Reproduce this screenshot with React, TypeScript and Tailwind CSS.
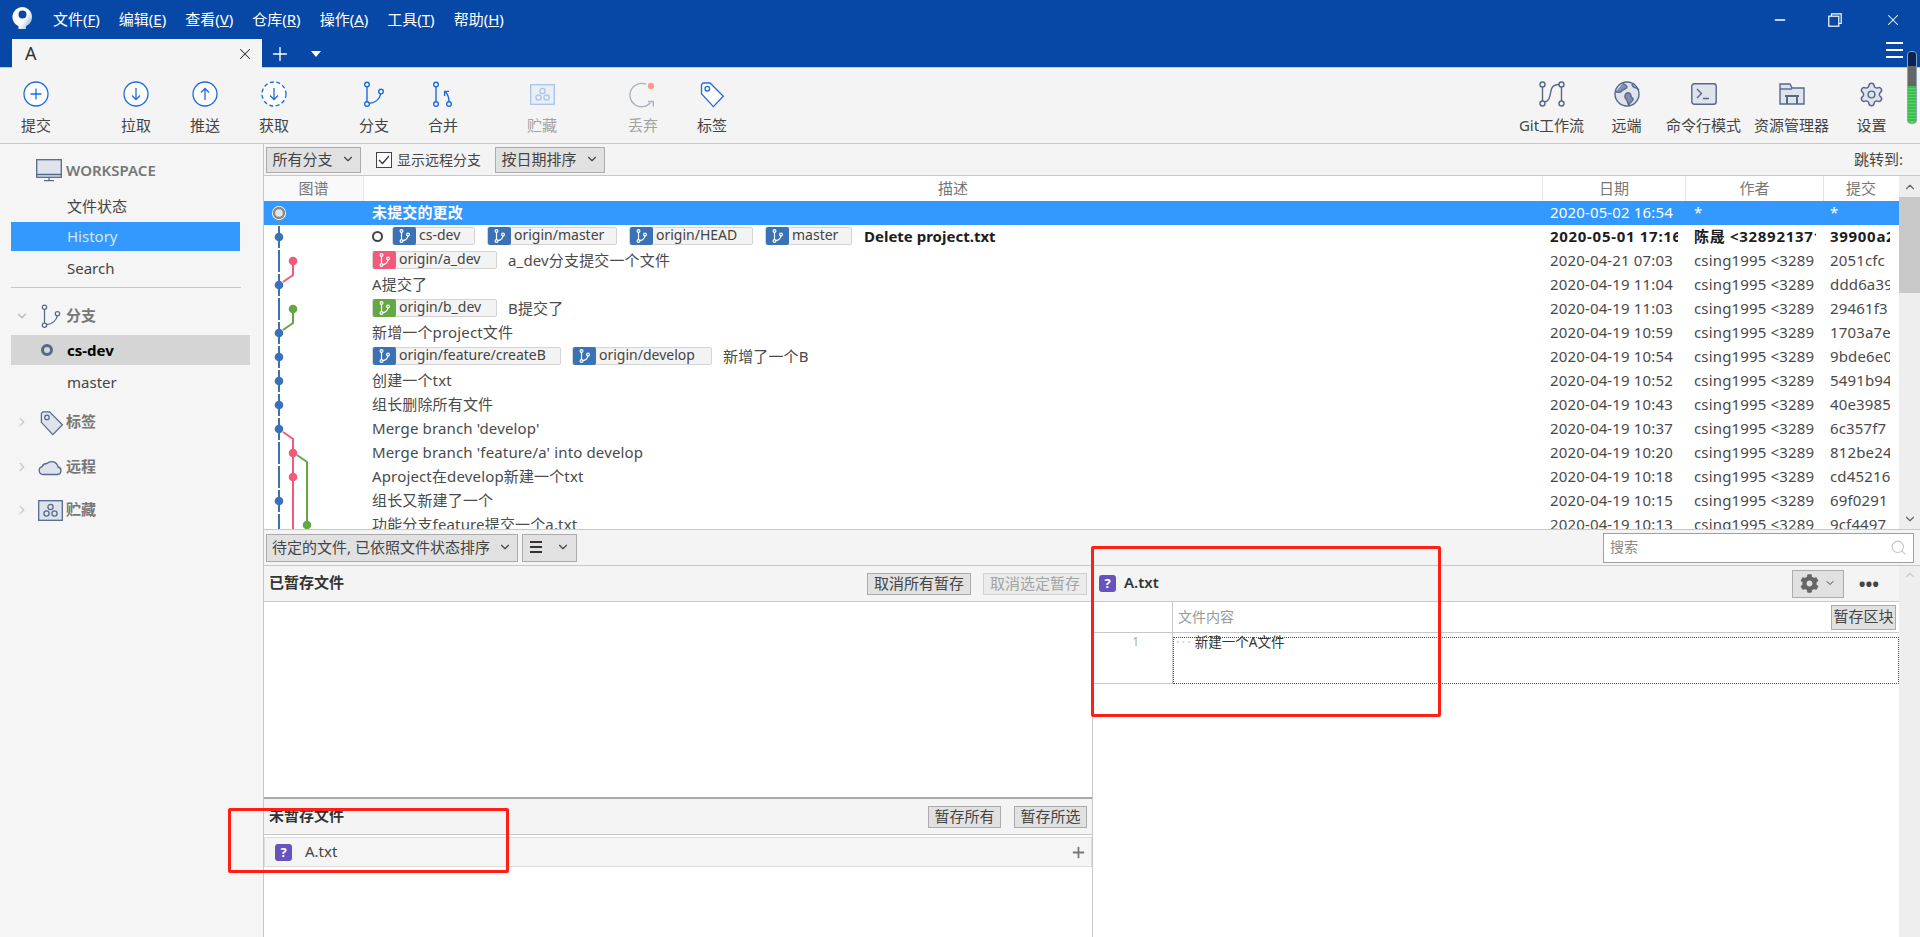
import type { ReactNode } from "react";
import { ChevronDown, ChevronRight, ChevronUp, Minus, Plus, Search, Settings, X } from "lucide-react";
import { FaCog } from "react-icons/fa";

const font = { fontFamily: '"Noto Sans", "Noto Sans CJK SC", sans-serif' };
const slate = "#56688c";
const slateFill = "#dfe3ec";
const blue = "#1c6ce0";

const menus = [
  ["文件(", "F", ")"],
  ["编辑(", "E", ")"],
  ["查看(", "V", ")"],
  ["仓库(", "R", ")"],
  ["操作(", "A", ")"],
  ["工具(", "T", ")"],
  ["帮助(", "H", ")"],
];

function CircleIcon({ dir, dashed }: { dir: "plus" | "down" | "up"; dashed?: boolean }) {
  return (
    <svg width="28" height="28" viewBox="0 0 28 28" fill="none" stroke={blue} strokeWidth="1.3">
      <circle cx="14" cy="14" r="12" fill="#fff" strokeDasharray={dashed ? "4 2.5" : undefined} />
      {dir === "plus" && <path d="M14 8.500v11M8.500 14h11" />}
      {dir === "down" && <path d="M14 8v11.500M10 15.500l4 4 4-4" />}
      {dir === "up" && <path d="M14 20V8.500M10 12.500l4-4 4 4" />}
    </svg>
  );
}

function BranchIcon({ color = blue, size = 28 }: { color?: string; size?: number }) {
  return (
    <svg width={size} height={size} viewBox="0 0 28 28" fill="none" stroke={color} strokeWidth="1.4">
      <circle cx="7" cy="4.500" r="2.300" fill="#fff" />
      <circle cx="7" cy="24" r="2.300" fill="#fff" />
      <circle cx="21" cy="11.500" r="2.300" fill="#fff" />
      <path d="M7 6.800v14.900M9.200 23.400c6-.8 10.600-4.600 11.500-9.600" />
    </svg>
  );
}

function MergeIcon() {
  return (
    <svg width="28" height="28" viewBox="0 0 28 28" fill="none" stroke={blue} strokeWidth="1.4">
      <circle cx="7" cy="4.500" r="2.300" fill="#fff" />
      <circle cx="7" cy="24" r="2.300" fill="#fff" />
      <circle cx="20" cy="24" r="2.300" fill="#fff" />
      <path d="M7 6.800v14.900M20 21.700c0-4-1.200-7.200-3.400-9.700M15.600 16v-4.600h4.400" />
    </svg>
  );
}

function StashIcon({ color, fill, w = 25, h = 21 }: { color: string; fill: string; w?: number; h?: number }) {
  return (
    <svg width={w} height={h} viewBox="0 0 25 21" fill={fill} stroke={color} strokeWidth="1.3">
      <rect x="0.700" y="0.700" width="23.600" height="19.600" />
      <circle cx="12.500" cy="7" r="2.600" fill="none" />
      <circle cx="8.500" cy="13.500" r="2.600" fill="none" />
      <circle cx="16.500" cy="13.500" r="2.600" fill="none" />
    </svg>
  );
}

function DiscardIcon() {
  return (
    <svg width="28" height="28" viewBox="0 0 28 28" fill="none" stroke="#aab2c0" strokeWidth="1.4">
      <path d="M17 4.200A11.700 11.700 0 1 0 21.500 22.700" />
      <path d="M19 21.500h5.300V26.500" />
      <circle cx="22" cy="6" r="3.200" fill="#ff9d8e" stroke="none" />
    </svg>
  );
}

function TagIcon({ color = blue, fill = "#fff", size = 28 }: { color?: string; fill?: string; size?: number }) {
  return (
    <svg width={size} height={size} viewBox="0 0 28 28" fill={fill} stroke={color} strokeWidth="1.3">
      <path d="M3.500 4.600 5 3h7l13.300 13.300L15.400 26.600 3.500 13.800z" />
      <circle cx="9.300" cy="8.700" r="2.300" />
    </svg>
  );
}

function GitFlowIcon() {
  return (
    <svg width="28" height="28" viewBox="0 0 28 28" fill="none" stroke={slate} strokeWidth="1.4">
      <circle cx="4.500" cy="4.500" r="2.500" />
      <circle cx="4.500" cy="23.500" r="2.500" />
      <circle cx="23.500" cy="4.500" r="2.500" />
      <circle cx="23.500" cy="23.500" r="2.500" />
      <path d="M4.500 7v14M23.500 7v14M6.500 22c6-1 5-7 7-13 1-3 4-4.500 7.500-4.500" />
    </svg>
  );
}

function GlobeIcon() {
  return (
    <svg width="28" height="28" viewBox="0 0 28 28" stroke={slate} strokeWidth="1.4">
      <circle cx="14" cy="14" r="12" fill={slateFill} />
      <path
        d="M10 3c1 2 4 2 4 4s-4 2-5 4-4 1-6.500 1M14 13c2-1 4 1 4 3s3 2 2 4-4 3-4 5c-2-2-1-4-3-6s-1-5 1-6zM19 4c0 2 2 4 4 4 1 0 2 1 3 2"
        fill="#8090ad"
      />
    </svg>
  );
}

function TerminalIcon() {
  return (
    <svg width="26" height="22" viewBox="0 0 26 22" fill={slateFill} stroke={slate} strokeWidth="1.4">
      <rect x="0.800" y="0.800" width="24.400" height="20.400" rx="2.500" />
      <path d="M6 6l4.500 4.500L6 15M12 15.500h6" fill="none" />
    </svg>
  );
}

function FolderIcon() {
  return (
    <svg width="26" height="22" viewBox="0 0 26 22" fill={slateFill} stroke={slate} strokeWidth="1.4">
      <path d="M1 21V1h10l2 4h12v16z" />
      <path d="M1 6h12" fill="none" />
      <path d="M8 21v-8h10v8M6 13h14" fill="none" strokeWidth="2" />
    </svg>
  );
}

function MonitorIcon() {
  return (
    <svg width="26" height="23" viewBox="0 0 26 23" fill={slateFill} stroke={slate} strokeWidth="1.3">
      <rect x="0.700" y="0.700" width="24.600" height="17.600" />
      <path d="M1 15.500h24M13 18.500v3M8 21.700h10" fill="none" />
    </svg>
  );
}

function CloudIcon() {
  return (
    <svg width="24" height="18" viewBox="0 0 24 18" fill={slateFill} stroke={slate} strokeWidth="1.3">
      <path d="M5 16.500A4 4 0 0 1 4 8.700 5 5 0 0 1 9 5.500a6.500 6.500 0 0 1 11 3.500 3.800 3.800 0 0 1-1 7.500z" />
    </svg>
  );
}

function ToolItem({ label, icon, width, muted }: { label: string; icon: ReactNode; width: string; muted?: boolean }) {
  return (
    <div className={`flex shrink-0 flex-col items-center ${width}`}>
      <div className="flex h-[28px] items-center justify-center">{icon}</div>
      <span className={`mt-[7px] whitespace-nowrap text-[15px] leading-[20px] ${muted ? "text-[#a3a3a3]" : "text-[#444]"}`}>{label}</span>
    </div>
  );
}

function SectionRow({ chevron, icon, label, className }: { chevron: "down" | "right"; icon: ReactNode; label: string; className: string }) {
  return (
    <div className={`flex items-center ${className}`}>
      <div className="flex w-[38px] shrink-0 justify-end pr-[5px]">
        {chevron === "down" ? (
          <ChevronDown size={14} className="mr-[4px] text-[#bbb]" strokeWidth={2.500} />
        ) : (
          <ChevronRight size={14} className="mr-[4px] text-[#ccc]" strokeWidth={2.500} />
        )}
      </div>
      <div className="flex w-[28px] shrink-0 justify-start">{icon}</div>
      <span className="pb-[2px] text-[15px] font-semibold text-[#777]">{label}</span>
    </div>
  );
}

function Btn({ children, className = "" }: { children: ReactNode; className?: string }) {
  return (
    <div className={`flex shrink-0 items-center justify-center whitespace-nowrap border border-[#ababab] bg-[#e1e1e1] pb-px text-[15px] text-[#444] ${className}`}>{children}</div>
  );
}

function RefBadge({ name, color, width }: { name: string; color: string; width: string }) {
  return (
    <div className={`flex h-[18px] shrink-0 items-center rounded-[2px] border border-[#d4d4d4] bg-[#f3f3f3] font-normal tracking-normal ${width}`}>
      <div className={`flex h-[18px] w-[23px] shrink-0 items-center justify-center rounded-[2px] ${color}`}>
        <svg width="13" height="14" viewBox="0 0 13 14" fill="none" stroke="#fff" strokeWidth="1.2">
          <circle cx="3.500" cy="2" r="1.400" />
          <circle cx="3.500" cy="12" r="1.400" />
          <circle cx="10" cy="5.500" r="1.400" />
          <path d="M3.500 3.400v7.200M4.800 11.700c2.700-.4 4.700-2.300 5.200-4.800" />
        </svg>
      </div>
      <span className="pb-[2px] pl-[3px] text-[14px] leading-none text-[#444]">{name}</span>
    </div>
  );
}

function QuestionIcon({ className = "" }: { className?: string }) {
  return (
    <div className={`flex h-[17px] w-[17px] shrink-0 items-center justify-center rounded-[3px] bg-[#6753bd] text-[13px] font-bold leading-none text-white ${className}`}>?</div>
  );
}

const blueRef = "bg-[#3a72b5]";
const rows: { desc: ReactNode; date: string; author: string; commit: string }[] = [
  { desc: null, date: "2020-05-02 16:54", author: "*", commit: "*" },
  { desc: null, date: "2020-05-01 17:16", author: "陈晟 <328921371", commit: "39900a2" },
  {
    desc: (
      <>
        <RefBadge name="origin/a_dev" color="bg-[#f2597a]" width="w-[125px]" />
        <span className="ml-[11px]">a_dev分支提交一个文件</span>
      </>
    ),
    date: "2020-04-21 07:03",
    author: "csing1995 <3289",
    commit: "2051cfc",
  },
  { desc: "A提交了", date: "2020-04-19 11:04", author: "csing1995 <3289", commit: "ddd6a39" },
  {
    desc: (
      <>
        <RefBadge name="origin/b_dev" color="bg-[#62a844]" width="w-[125px]" />
        <span className="ml-[11px]">B提交了</span>
      </>
    ),
    date: "2020-04-19 11:03",
    author: "csing1995 <3289",
    commit: "29461f3",
  },
  { desc: "新增一个project文件", date: "2020-04-19 10:59", author: "csing1995 <3289", commit: "1703a7e" },
  {
    desc: (
      <>
        <RefBadge name="origin/feature/createB" color={blueRef} width="w-[189px]" />
        <div className="ml-[11px]">
          <RefBadge name="origin/develop" color={blueRef} width="w-[140px]" />
        </div>
        <span className="ml-[11px]">新增了一个B</span>
      </>
    ),
    date: "2020-04-19 10:54",
    author: "csing1995 <3289",
    commit: "9bde6e0",
  },
  { desc: "创建一个txt", date: "2020-04-19 10:52", author: "csing1995 <3289", commit: "5491b94" },
  { desc: "组长删除所有文件", date: "2020-04-19 10:43", author: "csing1995 <3289", commit: "40e3985" },
  { desc: "Merge branch 'develop'", date: "2020-04-19 10:37", author: "csing1995 <3289", commit: "6c357f7" },
  { desc: "Merge branch 'feature/a' into develop", date: "2020-04-19 10:20", author: "csing1995 <3289", commit: "812be24" },
  { desc: "Aproject在develop新建一个txt", date: "2020-04-19 10:18", author: "csing1995 <3289", commit: "cd45216" },
  { desc: "组长又新建了一个", date: "2020-04-19 10:15", author: "csing1995 <3289", commit: "69f0291" },
  { desc: "功能分支feature提交一个a.txt", date: "2020-04-19 10:13", author: "csing1995 <3289", commit: "9cf4497" },
];

const blueDots = [1, 3, 5, 6, 7, 8, 9, 12];

function Graph() {
  const cy = (i: number) => 12 + 24 * i;
  return (
    <svg className="absolute left-0 top-0" width="60" height="329" viewBox="0 0 60 329" fill="none" strokeWidth="2">
      <path d="M15 12V329" stroke="#3a72b5" strokeDasharray="22 2" strokeDashoffset="11" />
      <path d="M29 60V74L19 81" stroke="#f2597a" />
      <path d="M29 108V122L19 129" stroke="#62a844" />
      <path d="M19 231L29 238V329" stroke="#f2597a" />
      <path d="M33 254L43 261V325" stroke="#62a844" />
      {blueDots.map((i) => (
        <circle key={i} cx="15" cy={cy(i)} r="4.300" fill="#3a72b5" stroke="none" />
      ))}
      <circle cx="29" cy={cy(2)} r="4.300" fill="#f2597a" stroke="none" />
      <circle cx="29" cy={cy(10)} r="4.300" fill="#f2597a" stroke="none" />
      <circle cx="29" cy={cy(11)} r="4.300" fill="#f2597a" stroke="none" />
      <circle cx="29" cy={cy(4)} r="4.300" fill="#62a844" stroke="none" />
      <circle cx="43" cy={cy(13)} r="4.300" fill="#62a844" stroke="none" />
      <path d="M15 12v12" stroke="#8a8a8a" />
      <circle cx="15" cy="12" r="7" fill="#fff" stroke="none" />
      <circle cx="15" cy="12" r="5" fill="#e6e6e6" stroke="#8a8a8a" strokeWidth="2.400" />
    </svg>
  );
}

function CommitRow({ row, index }: { row: (typeof rows)[number]; index: number }) {
  const selected = index === 0;
  const bold = index === 1;
  const tone = selected ? "text-white" : bold ? "font-bold text-[#1d1d1d]" : "text-[#4a4a4a]";
  const dataTrack = bold ? "tracking-[0.7px]" : "tracking-[0.15px]";
  return (
    <div className={`flex h-6 shrink-0 items-center pb-[2px] text-[15px] ${tone} ${selected ? "bg-[#3399ff]" : ""}`}>
      <div className="w-[108px] shrink-0" />
      <div className={`flex w-[1170px] shrink-0 items-center whitespace-nowrap ${bold ? "" : "tracking-[0.15px]"}`}>
        {selected && <span className="font-bold">未提交的更改</span>}
        {bold && (
          <>
            <span className="mr-[9px] h-[11px] w-[11px] shrink-0 rounded-full border-[2.5px] border-[#444]" />
            <RefBadge name="cs-dev" color={blueRef} width="w-[83px]" />
            <div className="ml-[12px]">
              <RefBadge name="origin/master" color={blueRef} width="w-[130px]" />
            </div>
            <div className="ml-[12px]">
              <RefBadge name="origin/HEAD" color={blueRef} width="w-[124px]" />
            </div>
            <div className="ml-[12px]">
              <RefBadge name="master" color={blueRef} width="w-[87px]" />
            </div>
            <span className="ml-[12px]">Delete project.txt</span>
          </>
        )}
        {row.desc}
      </div>
      <div className={`w-[136px] shrink-0 overflow-hidden whitespace-nowrap pl-[8px] ${dataTrack}`}>{row.date}</div>
      <div className={`ml-[7px] w-[131px] shrink-0 overflow-hidden whitespace-nowrap pl-[9px] ${dataTrack}`}>{row.author}</div>
      <div className={`ml-[7px] w-[67px] shrink-0 overflow-hidden whitespace-nowrap pl-[7px] ${dataTrack}`}>{row.commit}</div>
      <div className="w-[9px] shrink-0" />
    </div>
  );
}

function AppLogo() {
  return (
    <svg width="21" height="23" viewBox="0 0 21 23">
      <defs>
        <linearGradient id="logoFade" x1="0.300" y1="0.300" x2="1" y2="0.800">
          <stop offset="0.450" stopColor="#fff" />
          <stop offset="1" stopColor="#8fb0e0" />
        </linearGradient>
      </defs>
      <path
        fill="url(#logoFade)"
        fillRule="evenodd"
        d="M10 0a10 10 0 0 1 4 19.200V22H6.500v-2.800A10 10 0 0 1 10 0zm.5 3.500a4 4 0 1 0 0 8 4 4 0 0 0 0-8z"
      />
    </svg>
  );
}

export default function App() {
  return (
    <div className="relative flex h-[937px] w-[1920px] flex-col overflow-hidden bg-[#f4f4f4] text-[#444]" style={font}>
      <header className="h-[68px] shrink-0 border-b border-[#bfcbe2] bg-[#0747a6] text-white">
        <div className="flex h-[39px] items-center">
          <div className="ml-[12px] mt-[-2px] flex w-[22px] shrink-0">
            <AppLogo />
          </div>
          <nav className="ml-[19px] flex gap-[19px] text-[15px]">
            {menus.map(([a, k, b]) => (
              <span key={k} className="whitespace-nowrap">
                {a}
                <span className="underline">{k}</span>
                {b}
              </span>
            ))}
          </nav>
          <div className="ml-auto flex items-center">
            <Minus size={16} strokeWidth={2} />
            <svg className="ml-[40px]" width="14" height="14" viewBox="0 0 14 14" fill="none" stroke="#fff" strokeWidth="1.200">
              <rect x="0.800" y="3.200" width="10" height="10" />
              <path d="M3.500 3V.8h9.700v9.700H11" />
            </svg>
            <X size={18} strokeWidth={1.400} className="ml-[42px] mr-[18px]" />
          </div>
        </div>
        <div className="flex h-[29px] items-center">
          <div className="ml-[12px] flex h-[29px] w-[250px] items-center justify-between bg-[#f4f4f4] pl-[13px] pr-[8px] text-[#333]">
            <span className="text-[18px]">A</span>
            <X size={18} strokeWidth={1.400} />
          </div>
          <Plus size={22} strokeWidth={1.500} className="ml-[7px]" />
          <span className="ml-[20px] mt-[1px] h-0 w-0 border-x-[5px] border-t-[6px] border-x-transparent border-t-white" />
          <div className="ml-auto mr-[17px] mt-[-8px] flex w-[17px] flex-col gap-[5px]">
            <span className="h-[2px] bg-white" />
            <span className="h-[2px] bg-white" />
            <span className="h-[2px] bg-white" />
          </div>
        </div>
      </header>

      <div className="flex h-[76px] shrink-0 items-start border-b border-[#c8c8c8] pt-[12px]">
        <div className="flex pl-[2px]">
          <ToolItem width="w-[68px]" label="提交" icon={<CircleIcon dir="plus" />} />
          <div className="ml-[32px] flex gap-[1px]">
            <ToolItem width="w-[68px]" label="拉取" icon={<CircleIcon dir="down" />} />
            <ToolItem width="w-[68px]" label="推送" icon={<CircleIcon dir="up" />} />
            <ToolItem width="w-[68px]" label="获取" icon={<CircleIcon dir="down" dashed />} />
          </div>
          <div className="ml-[32px] flex gap-[1px]">
            <ToolItem width="w-[68px]" label="分支" icon={<BranchIcon />} />
            <ToolItem width="w-[68px]" label="合并" icon={<MergeIcon />} />
          </div>
          <div className="ml-[31px]">
            <ToolItem width="w-[68px]" muted label="贮藏" icon={<StashIcon color="#a9c3e8" fill="#eaeff6" />} />
          </div>
          <div className="ml-[33px]">
            <ToolItem width="w-[68px]" muted label="丢弃" icon={<DiscardIcon />} />
          </div>
          <div className="ml-[1px]">
            <ToolItem width="w-[68px]" label="标签" icon={<TagIcon />} />
          </div>
        </div>
        <div className="ml-auto flex pr-[17px]">
          <ToolItem width="w-[75px]" label="Git工作流" icon={<GitFlowIcon />} />
          <ToolItem width="w-[75px]" label="远端" icon={<GlobeIcon />} />
          <ToolItem width="w-[79px]" label="命令行模式" icon={<TerminalIcon />} />
          <ToolItem width="w-[97px]" label="资源管理器" icon={<FolderIcon />} />
          <ToolItem width="w-[63px]" label="设置" icon={<Settings size={27} color={slate} fill={slateFill} strokeWidth={1.300} />} />
        </div>
      </div>

      <div className="flex min-h-0 flex-1">
        <aside className="w-[264px] shrink-0 border-r border-[#c8c8c8] bg-[#f5f5f5] text-[15px]">
          <div className="mt-[12px] flex h-[28px] items-center pl-[36px] text-[15px] font-semibold text-[#777]">
            <MonitorIcon />
            <span className="ml-[4px]">WORKSPACE</span>
          </div>
          <div className="mt-[8px] flex h-[30px] items-center pb-[2px] pl-[67px]">文件状态</div>
          <div className="ml-[11px] flex h-[29px] w-[229px] items-center bg-[#3399ff] pl-[56px] text-[#d5e6fb]">History</div>
          <div className="flex h-[34px] items-center pl-[67px]">Search</div>
          <div className="ml-[11px] mt-[2px] h-px w-[230px] bg-[#c8c8c8]" />
          <SectionRow className="mt-[9px] h-[38px]" chevron="down" icon={<BranchIcon color={slate} size={26} />} label="分支" />
          <div className="ml-[11px] flex h-[30px] w-[239px] items-center bg-[#d5d5d5] font-bold text-black">
            <span className="ml-[30px] h-[12px] w-[12px] rounded-full border-[3px] border-[#56688c]" />
            <span className="ml-[14px]">cs-dev</span>
          </div>
          <div className="mt-[2px] flex h-[30px] items-center pl-[67px]">master</div>
          <SectionRow className="mt-[5px] h-[40px]" chevron="right" icon={<TagIcon color={slate} fill={slateFill} size={27} />} label="标签" />
          <SectionRow className="mt-[5px] h-[40px]" chevron="right" icon={<CloudIcon />} label="远程" />
          <SectionRow className="mt-[3px] h-[40px]" chevron="right" icon={<StashIcon color={slate} fill={slateFill} />} label="贮藏" />
        </aside>

        <main className="flex min-w-0 flex-1 flex-col">
          <div className="flex h-[32px] shrink-0 items-center border-b border-[#c8c8c8] pl-[2px] text-[14px]">
            <Btn className="h-[26px] w-[95px] gap-[8px]">
              所有分支
              <ChevronDown size={14} />
            </Btn>
            <span className="ml-[15px] flex h-[16px] w-[16px] items-center justify-center border border-[#444] bg-white">
              <svg width="12" height="10" viewBox="0 0 12 10" fill="none" stroke="#333" strokeWidth="1.200">
                <path d="M1 5l3.500 3.500L11 1" />
              </svg>
            </span>
            <span className="ml-[5px] pb-px">显示远程分支</span>
            <Btn className="ml-[14px] h-[26px] w-[110px] gap-[8px]">
              按日期排序
              <ChevronDown size={14} />
            </Btn>
            <span className="ml-auto mr-[17px] pb-px text-[15px]">跳转到:</span>
          </div>

          <div className="flex h-[354px] shrink-0 border-b border-[#c8c8c8] bg-white">
            <div className="flex min-w-0 flex-1 flex-col">
              <div className="flex h-[25px] shrink-0 bg-white text-center text-[15px] leading-[24px] text-[#777]">
                <div className="w-[99px] shrink-0 bg-[#f9f9f9]">图谱</div>
                <div className="w-[1179px] shrink-0 border-l border-[#e4e4e4]">描述</div>
                <div className="w-[143px] shrink-0 border-l border-[#e4e4e4]">日期</div>
                <div className="w-[138px] shrink-0 border-l border-[#e4e4e4]">作者</div>
                <div className="w-[75px] shrink-0 border-l border-[#e4e4e4]">提交</div>
              </div>
              <div className="relative flex min-h-0 flex-1 flex-col overflow-hidden">
                {rows.map((row, i) => (
                  <CommitRow key={row.date} row={row} index={i} />
                ))}
                <Graph />
              </div>
            </div>
            <div className="flex w-[21px] shrink-0 flex-col bg-[#eee]">
              <div className="flex h-[21px] items-center justify-center">
                <ChevronUp size={14} className="text-[#666]" />
              </div>
              <div className="h-[96px] bg-[#c8c8c8]" />
              <div className="flex-1" />
              <div className="flex h-[21px] items-center justify-center">
                <ChevronDown size={14} className="text-[#666]" />
              </div>
            </div>
          </div>

          <div className="flex h-[36px] shrink-0 items-center border-b border-[#c8c8c8] pl-[2px]">
            <Btn className="h-[28px] w-[252px] gap-[8px]">
              待定的文件, 已依照文件状态排序
              <ChevronDown size={14} />
            </Btn>
            <Btn className="ml-[4px] h-[28px] w-[55px] gap-[14px]">
              <div className="flex w-[12px] flex-col gap-[3px]">
                <span className="h-[2px] bg-[#333]" />
                <span className="h-[2px] bg-[#333]" />
                <span className="h-[2px] bg-[#333]" />
              </div>
              <ChevronDown size={14} />
            </Btn>
            <div className="ml-auto mr-[6px] flex h-[30px] w-[311px] items-center justify-between border border-[#a0a0a0] bg-white pl-[6px] pr-[6px] text-[14px] text-[#888]">
              <span className="pb-[3px]">搜索</span>
              <Search size={17} className="text-[#c4c4c4]" strokeWidth={1.500} />
            </div>
          </div>

          <div className="flex min-h-0 flex-1">
            <div className="flex w-[829px] shrink-0 flex-col border-r border-[#c8c8c8]">
              <div className="flex h-[36px] shrink-0 items-center border-b border-[#c8c8c8] pl-[5px] pr-[5px]">
                <span className="pb-[2px] text-[15px] font-semibold text-[#333]">已暂存文件</span>
                <Btn className="ml-auto h-[22px] w-[104px]">取消所有暂存</Btn>
                <Btn className="ml-[12px] h-[22px] w-[104px] border-[#d0d0d0] bg-[#ebebeb] text-[#a3a3a3]">取消选定暂存</Btn>
              </div>
              <div className="h-[197px] shrink-0 border-b-2 border-[#aaa] bg-white" />
              <div className="flex h-[36px] shrink-0 items-center border-b border-[#c8c8c8] pl-[5px] pr-[5px]">
                <span className="pb-[2px] text-[15px] font-semibold text-[#333]">未暂存文件</span>
                <Btn className="ml-auto h-[22px] w-[73px]">暂存所有</Btn>
                <Btn className="ml-[13px] h-[22px] w-[73px]">暂存所选</Btn>
              </div>
              <div className="flex-1 bg-white pt-[2px]">
                <div className="flex h-[30px] items-center border border-[#ddd] bg-[#f5f5f5] pl-[10px] pr-[4px] text-[15px] text-[#444]">
                  <QuestionIcon />
                  <span className="ml-[13px] pb-[2px]">A.txt</span>
                  <Plus size={17} strokeWidth={2.500} className="ml-auto text-[#777]" />
                </div>
              </div>
            </div>

            <div className="flex min-w-0 flex-1">
              <div className="flex min-w-0 flex-1 flex-col">
                <div className="flex h-[36px] shrink-0 items-center border-b border-[#c8c8c8] pl-[6px]">
                  <QuestionIcon />
                  <span className="ml-[8px] pb-[2px] text-[15px] font-semibold text-[#333]">A.txt</span>
                  <Btn className="ml-auto h-[28px] w-[52px] gap-[5px]">
                    <FaCog size={19} color="#666" />
                    <ChevronDown size={12} />
                  </Btn>
                  <span className="ml-[15px] mr-[20px] text-[18px] font-bold leading-none">•••</span>
                </div>
                <div className="flex h-[31px] shrink-0 border-b border-[#c8c8c8] bg-white">
                  <div className="w-[80px] shrink-0 border-r border-[#c8c8c8]" />
                  <div className="flex flex-1 items-center pl-[5px] pr-[3px] text-[14px] text-[#999]">
                    <span className="pb-px">文件内容</span>
                    <Btn className="ml-auto h-[25px] w-[65px] text-[14px]">暂存区块</Btn>
                  </div>
                </div>
                <div className="flex-1 bg-white">
                  <div className="flex h-[51px]">
                    <div className="w-[80px] shrink-0 border-b border-r border-[#c8c8c8] pr-[33px] text-right text-[12px] text-[#aaa]">1</div>
                    <div className="mt-[4px] flex-1 border border-dotted border-[#555] pl-[2px] text-[13.5px] leading-[8px] text-[#333]">
                      <span className="mr-[2px] tracking-[2px] text-[#ccc]">···</span>
                      新建一个A文件
                    </div>
                  </div>
                </div>
              </div>
              <div className="flex w-[21px] shrink-0 justify-center bg-[#eee] pt-[2px]">
                <ChevronUp size={14} className="text-[#ccc]" />
              </div>
            </div>
          </div>
        </main>
      </div>

      {/* meter over the toolbar corner */}
      <div className="absolute left-[1907px] top-[51px] flex h-[73px] w-[10px] flex-col overflow-hidden rounded-[4px] border border-[#8aa0c0] bg-[#666]">
        <div className="h-[14px] bg-[#082452]" />
        <div className="h-[20px]" />
        <div className="flex flex-1 flex-col gap-[1px] bg-[#6c6]">
          {Array.from({ length: 12 }, (_, i) => (
            <span key={i} className="h-[2px] bg-[#35c24a]" />
          ))}
        </div>
      </div>

      {/* red annotation boxes */}
      <div className="pointer-events-none absolute left-[1091px] top-[546px] h-[171px] w-[350px] rounded-[2px] border-[3px] border-[#ff1f14]" />
      <div className="pointer-events-none absolute left-[228px] top-[808px] h-[65px] w-[281px] rounded-[2px] border-[3px] border-[#ff1f14]" />
    </div>
  );
}
